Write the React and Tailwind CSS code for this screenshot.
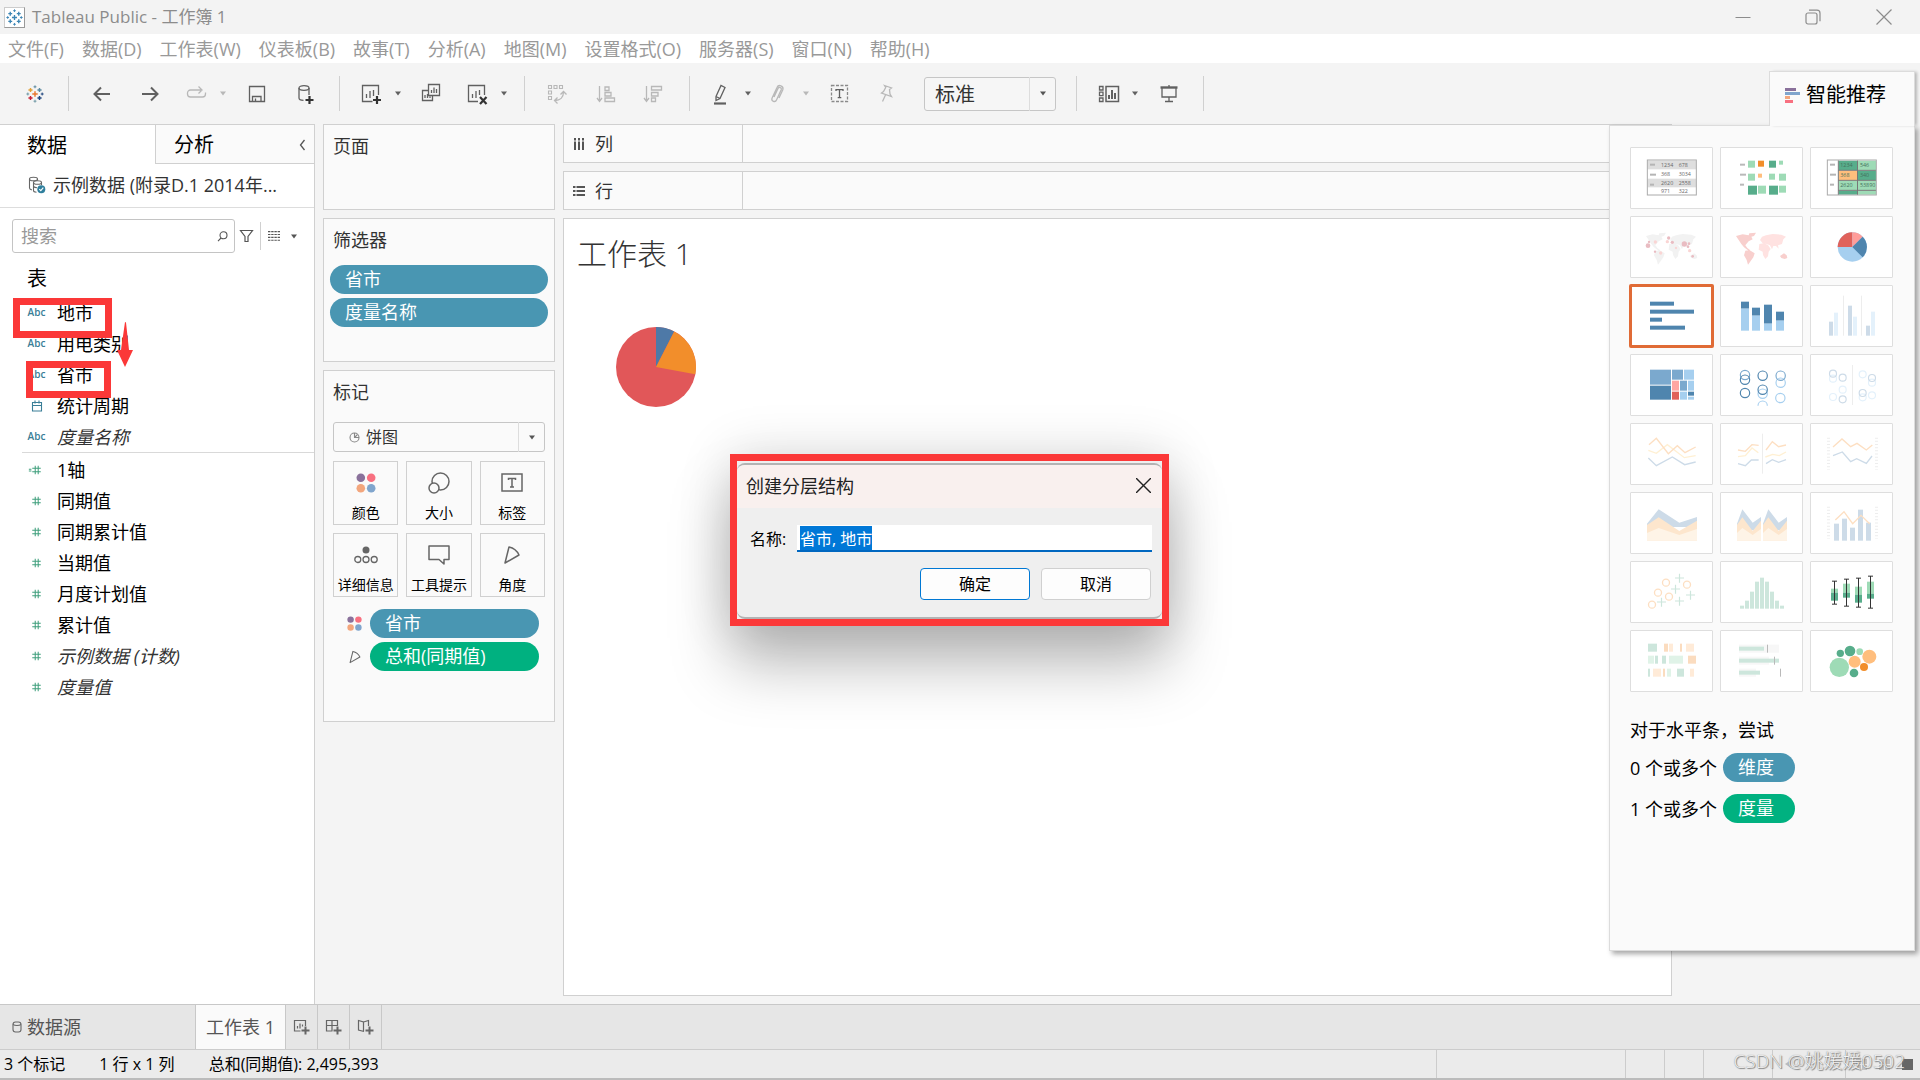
import React, { useState } from 'react'

const MENUS = ['文件(F)', '数据(D)', '工作表(W)', '仪表板(B)', '故事(T)', '分析(A)', '地图(M)', '设置格式(O)', '服务器(S)', '窗口(N)', '帮助(H)']

const DIMENSIONS = [
  { name: '地市', type: 'abc' },
  { name: '用电类别', type: 'abc' },
  { name: '省市', type: 'abc' },
  { name: '统计周期', type: 'date' },
  { name: '度量名称', type: 'abc', generated: true },
]

const MEASURES = [
  { name: '1轴', type: 'number', calculated: true },
  { name: '同期值', type: 'number' },
  { name: '同期累计值', type: 'number' },
  { name: '当期值', type: 'number' },
  { name: '月度计划值', type: 'number' },
  { name: '累计值', type: 'number' },
  { name: '示例数据 (计数)', type: 'number', generated: true },
  { name: '度量值', type: 'number', generated: true },
]

/* ---------- small pieces ---------- */

function Caret({ className = 'text-[#555]' }) {
  return (
    <svg width="8" height="5" viewBox="0 0 8 5" className={className}>
      <path d="M1 0.5h6L4 4.5z" fill="currentColor" />
    </svg>
  )
}

function Sep() {
  return <div className="w-px h-[35px] bg-[#d0d0d0] mx-2.5" />
}

function ToolButton({ label, children, caret, faded }) {
  const color = faded ? 'text-[#b8b8b8]' : 'text-[#606060]'
  return (
    <div className={`flex h-10 ${color}`}>
      <button aria-label={label} className={`${caret ? 'w-11' : 'w-12'} flex items-center justify-center`}>
        <svg width="24" height="24" viewBox="0 0 24 24" fill="none" stroke="currentColor" strokeWidth="1.3">
          {children}
        </svg>
      </button>
      {caret && (
        <button aria-label={`${label} 选项`} className="w-3.5 flex items-center">
          <Caret className={color} />
        </button>
      )}
    </div>
  )
}

function Plus({ x, y, s, color, w = 1.6 }) {
  return <path d={`M${x - s} ${y}h${2 * s}M${x} ${y - s}v${2 * s}`} stroke={color} strokeWidth={w} />
}

function TableauMark({ size, colors }) {
  const [a, b, c, d, e, f] = colors
  return (
    <svg width={size} height={size} viewBox="0 0 20 20" fill="none">
      <Plus x={10} y={10} s={3} color={a} />
      <Plus x={5} y={5.5} s={2.3} color={b} />
      <Plus x={15} y={5.5} s={2.3} color={c} />
      <Plus x={5} y={14.5} s={2.3} color={d} />
      <Plus x={15} y={14.5} s={2.3} color={e} />
      <Plus x={10} y={2} s={1.6} color={c} w={1.1} />
      <Plus x={10} y={18} s={1.6} color={f} w={1.1} />
      <Plus x={2} y={10} s={1.6} color={f} w={1.1} />
      <Plus x={18} y={10} s={1.6} color={e} w={1.1} />
    </svg>
  )
}

function ColorDots({ size }) {
  return (
    <svg width={size} height={size} viewBox="0 0 20 20">
      <circle cx="4.8" cy="4.8" r="4.3" fill="#8a719b" />
      <circle cx="15.2" cy="4.8" r="4.3" fill="#f87080" />
      <circle cx="4.8" cy="15.2" r="4.3" fill="#f3a67d" />
      <circle cx="15.2" cy="15.2" r="4.3" fill="#80a5cd" />
    </svg>
  )
}

function AngleIcon({ size }) {
  return (
    <svg width={size} height={size} viewBox="0 0 20 20" fill="none" stroke="#666" strokeWidth="1.5" strokeLinejoin="round">
      <path d="M7 2 L3 18 L17 10 Q14 3.5 7 2z" />
    </svg>
  )
}

function Pill({ color, className = '', children }) {
  const bg = color === 'green' ? 'bg-[#00b180]' : 'bg-[#4996b2]'
  return (
    <div className={`${bg} ${className} h-[29px] rounded-full px-[15px] text-lg leading-[29px] text-white whitespace-nowrap`}>
      {children}
    </div>
  )
}

function FieldIcon({ field }) {
  if (field.type === 'abc') return 'Abc'
  if (field.type === 'date') {
    return (
      <svg width="12" height="12" viewBox="4 0 12 12" stroke="#3a7e97" strokeWidth="1.1" fill="none">
        <path d="M5.5 2.5h9v8.5h-9zM5.5 5.5h9M8 0.5v3M12 0.5v3" />
      </svg>
    )
  }
  return (
    <svg width="20" height="12" viewBox="0 0 20 12" stroke="#3f9f7c" strokeWidth="1.2" fill="none">
      <path d="M5 4h10M5 8h10M8.5 1v10M12 1v10" />
      {field.calculated && <path d="M1 5h3M1 7.2h3" />}
    </svg>
  )
}

function FieldRow({ field, className }) {
  return (
    <li className={`flex items-center h-[31px] gap-3 ${className}`}>
      <span className="w-[17px] flex justify-center text-[10px] font-semibold text-[#3a7e97]"><FieldIcon field={field} /></span>
      <span className={`text-lg leading-[26px] ${field.generated ? 'italic text-[#333]' : 'text-black'}`}>{field.name}</span>
    </li>
  )
}

/* ---------- title, menu and toolbar ---------- */

function TitleBar() {
  return (
    <header className="h-[34px] bg-[#f3f3f3] flex items-center pl-1 text-[#8c8c8c]">
      <span className="w-[21px] h-[21px] bg-white border border-r-[#999] border-b-[#999] border-[#ccc] flex items-center justify-center">
        <TableauMark size={17} colors={['#3d86b5', '#3d86b5', '#3d86b5', '#3d86b5', '#3d86b5', '#3d86b5']} />
      </span>
      <h1 className="ml-[7px] text-[17px] leading-[26px]">Tableau Public - 工作簿 1</h1>
      <div className="ml-auto flex">
        <button aria-label="最小化" className="w-[70px] flex justify-center">
          <svg width="16" height="16" viewBox="0 0 16 16" stroke="currentColor" fill="none"><path d="M0.5 8.5h15" /></svg>
        </button>
        <button aria-label="还原" className="w-[70px] flex justify-center">
          <svg width="16" height="16" viewBox="0 0 16 16" stroke="currentColor" strokeWidth="1.2" fill="none">
            <rect x="1" y="4" width="11" height="11" rx="2" />
            <path d="M4 1.2h8a3 3 0 0 1 3 3v8" />
          </svg>
        </button>
        <button aria-label="关闭" className="w-[72px] flex justify-center">
          <svg width="16" height="16" viewBox="0 0 16 16" stroke="currentColor" strokeWidth="1.2" fill="none"><path d="M0.5 0.5l15 15M15.5 0.5l-15 15" /></svg>
        </button>
      </div>
    </header>
  )
}

function Toolbar() {
  return (
    <div className="h-[61px] flex items-center bg-[#f4f4f4]">
      <button aria-label="开始页" className="w-[58px] pl-3 flex justify-center">
        <TableauMark size={18} colors={['#e8762c', '#e0a13a', '#5b8aa0', '#c72035', '#1f457e', '#7099a6']} />
      </button>
      <Sep />
      <ToolButton label="撤消"><path d="M19 12H4M10 5.5L3.5 12l6.5 6.5" strokeWidth="2" /></ToolButton>
      <ToolButton label="重做"><path d="M3 12h15M12 5.5l6.5 6.5-6.5 6.5" strokeWidth="2" /></ToolButton>
      <ToolButton label="恢复" faded caret>
        <path d="M16 8H5.5a3 3 0 0 0-3 3v1a3 3 0 0 0 3 3h12a3 3 0 0 0 3-3v-1.5M13.5 4.5L17 8l-3.5 3.5" />
      </ToolButton>
      <ToolButton label="保存"><path d="M4.5 4.5h15v15h-15zM7.5 19.5v-5h8.5v5M10.5 19.5v-3" /></ToolButton>
      <ToolButton label="新建数据源">
        <path d="M6 6v10c0 1.5 2 2.3 4.5 2.3M16 6v7" />
        <ellipse cx="11" cy="6" rx="5" ry="2.3" />
        <path d="M16.5 14v8M12.5 18h8" stroke="#333" strokeWidth="2.2" />
      </ToolButton>
      <Sep />
      <ToolButton label="新建工作表" caret>
        <path d="M12.5 19.5h-10v-16h16V13M6.5 16v-4M10 16V9M13.5 14v-6" />
        <path d="M17 14v8M13 18h8" stroke="#333" strokeWidth="2.2" />
      </ToolButton>
      <ToolButton label="复制">
        <path d="M8.5 2.5h11v11h-11zM8.5 8.5h-6v10h10v-5M11.5 11v-3M14 11V5.5M16.5 11V7M5 16v-3M7.5 16v-4M10 16v-1.5" />
      </ToolButton>
      <ToolButton label="清除工作表" caret>
        <path d="M12 19.5H2.500v-16h16V13M6.500 16v-4M10 16V9M13.500 13V8" />
        <path d="M14 15l6.500 7M20.500 15L14 22" stroke="#333" strokeWidth="2.200" />
      </ToolButton>
      <Sep />
      <ToolButton label="交换行和列" faded>
        <path d="M1.5 3.5h3v3h-3zM7 3.5h3v3H7zM12.5 3.5h3v3h-3zM1.5 9h3v3h-3zM1.5 14.5h3v3h-3z" strokeWidth="1.1" />
        <path d="M8 18.5c5 0 8.5-3 8.5-8.5M13.5 12.500l3-3 3 3M10.500 15.500l-3 3 3 3" />
      </ToolButton>
      <ToolButton label="升序排序" faded>
        <path d="M4.5 4v15M2 16l2.5 3.5L7 16M10 5h4v3.5h-4zM10 10.5h6V14h-6zM10 16h9.5v3.5H10z" />
      </ToolButton>
      <ToolButton label="降序排序" faded>
        <path d="M3.5 4v15M1 16l2.5 3.5L6 16M8.5 4.5h10V8h-10zM8.5 10.5h6.5V14H8.500zM8.500 16h4v3.500h-4z" />
      </ToolButton>
      <Sep />
      <ToolButton label="突出显示" caret>
        <path d="M6 14.5L11 3.5l4 2-5 11-4 2zM6 14.5l4 2" />
        <path d="M4 21.5h12" strokeWidth="2.2" />
      </ToolButton>
      <ToolButton label="组成员" faded caret>
        <path d="M6 15l4-8.5c1-2 4-1 3.2 1.2L8.500 18c-1.200 2.800-5.500 1.200-4.500-1.800L9 5.500c1.500-3.500 7-1.800 5.800 2.200L11 16" />
      </ToolButton>
      <ToolButton label="显示标记标签">
        <rect x="3.5" y="3.5" width="16" height="16" strokeDasharray="3 1.5" stroke="#8a8a8a" />
        <path d="M8 9V7.7h7V9M11.5 7.7v8M9.700 15.700h3.600" />
      </ToolButton>
      <ToolButton label="固定轴" faded>
        <path d="M8.500 3.500L15.500 6l-2 1.500.5 4.500 1.500 2.500-10-3.500 2-1.500 2.200-4zM9.500 13l-3 6.500" />
      </ToolButton>
      <div className="relative ml-3 w-[132px] h-[34px]">
        <select aria-label="适合" defaultValue="标准" className="appearance-none w-full h-full pl-2.5 pt-0.5 text-xl leading-[30px] text-[#333] bg-[#f6f6f6] border border-[#c6c6c6] rounded-[3px]">
          <option>标准</option>
          <option>适合宽度</option>
          <option>整个视图</option>
        </select>
        <span className="pointer-events-none absolute right-0 top-0 h-full w-[27px] border-l border-[#ddd] flex items-center justify-center"><Caret /></span>
      </div>
      <div className="w-2.5" />
      <Sep />
      <ToolButton label="显示卡" caret>
        <path d="M9 4.5h12.5v15H9z" strokeWidth="1.5" />
        <path d="M2.5 4.5h3.5v3.5H2.5zM2.5 10.2h3.5v3.5H2.5zM2.5 16h3.5v3.5H2.5z" />
        <path d="M12 17v-4M15 17V8M18 17v-6" strokeWidth="2" />
      </ToolButton>
      <ToolButton label="演示模式">
        <path d="M3.5 5.5h17" strokeWidth="2.4" />
        <path d="M5 6v9h14V6M12 15v4.5M8 19.5h8M12 3v2" />
      </ToolButton>
      <Sep />
    </div>
  )
}

/* ---------- data pane ---------- */

function DataPane() {
  return (
    <aside className="w-[315px] shrink-0 bg-white border-r border-t border-[#d0d0d0] text-black">
      <div className="flex h-[39px]" role="tablist">
        <button role="tab" aria-selected="true" className="w-[155px] pl-[27px] pt-0.5 text-left text-xl">数据</button>
        <button role="tab" aria-selected="false" className="flex-1 pl-[18px] pr-2 pt-0.5 flex items-center justify-between text-xl bg-[#fafafa] border-l border-b border-[#d0d0d0]">
          分析
          <svg width="7" height="12" viewBox="0 0 7 12" fill="none" stroke="#555" strokeWidth="1.3"><path d="M5.5 1L1.5 6l4 5" /></svg>
        </button>
      </div>

      <div className="flex items-center h-[44px] pl-7 pb-0.5 gap-[7px] border-b border-[#ddd]">
        <svg width="18" height="18" viewBox="0 0 18 18" fill="none" stroke="#666" strokeWidth="1.1">
          <ellipse cx="5.5" cy="3" rx="4" ry="1.8" />
          <path d="M1.5 3v9c0 1 1 1.6 2.3 1.9M9.5 3v1.5" />
          <ellipse cx="9.5" cy="6.5" rx="4" ry="1.8" />
          <path d="M5.5 6.5v8c0 1 1.5 1.7 3 1.8M13.5 6.5v2.5M5.5 10.5c1 1 2 1.3 3.5 1.3" />
          <circle cx="13.3" cy="13.2" r="4" fill="#2f7f9d" stroke="none" />
          <path d="M11.3 13.2l1.5 1.5 2.5-3" stroke="#fff" />
        </svg>
        <span className="text-lg text-[#333] whitespace-nowrap">示例数据 (附录D.1 2014年...</span>
      </div>

      <div className="flex items-center mt-[11px] pl-3">
        <div className="relative w-[223px] h-[34px]">
          <input aria-label="搜索" placeholder="搜索" className="w-full h-full pl-2 text-lg text-black placeholder:text-[#999] bg-white border border-[#c4c4c4] rounded-[3px]" />
          <svg className="absolute right-[7px] top-3" width="11" height="11" viewBox="0 0 11 11" fill="none" stroke="#555" strokeWidth="1.1">
            <circle cx="6.5" cy="4.3" r="3.5" /><path d="M4 7L1 10.2" />
          </svg>
        </div>
        <button aria-label="筛选" className="ml-1">
          <svg width="15" height="14" viewBox="0 0 15 14" fill="none" stroke="#555" strokeWidth="1.2"><path d="M1.5 1.5h12L9 7.5V12.5H6V7.5z" /></svg>
        </button>
        <div className="w-px h-7 bg-[#d0d0d0] ml-1.5 mr-[7px]" />
        <button aria-label="视图" className="flex items-center gap-2.5">
          <svg width="12" height="10" viewBox="0 0 12 10" stroke="#555" strokeDasharray="2.4 0.8" strokeWidth="1.1"><path d="M0 0.6h12M0 3.5h12M0 6.4h12M0 9.3h12" /></svg>
          <Caret />
        </button>
      </div>

      <h2 className="pl-[27px] mt-2.5 h-[34px] leading-[32px] text-xl">表</h2>
      <ul>
        {DIMENSIONS.map((f) => <FieldRow key={f.name} field={f} className="pl-7" />)}
      </ul>
      <ul className="ml-[22px] border-t border-[#d9d9d9] pt-px">
        {MEASURES.map((f) => <FieldRow key={f.name} field={f} className="pl-1.5" />)}
      </ul>
    </aside>
  )
}

/* ---------- cards column ---------- */

function MarkButton({ label, children }) {
  return (
    <button className="h-16 pt-2 flex flex-col items-center justify-between border border-[#d0d0d0] text-sm leading-[22px] text-black whitespace-nowrap">
      <span className="h-[26px] flex items-center">{children}</span>
      {label}
    </button>
  )
}

function CardsColumn() {
  const card = 'bg-[#fafafa] border border-[#d0d0d0] text-[#333]'
  return (
    <div className="w-[232px] shrink-0 ml-2 flex flex-col gap-2">
      <section className={`${card} h-[86px] px-[9px] pt-[7px]`}>
        <h2 className="text-lg">页面</h2>
      </section>
      <section className={`${card} h-[144px] pt-[7px] px-1.5`}>
        <h2 className="text-lg pl-[3px]">筛选器</h2>
        <div className="flex flex-col gap-1 mt-[11px]">
          <Pill>省市</Pill>
          <Pill>度量名称</Pill>
        </div>
      </section>
      <section className={`${card} h-[352px] px-[9px] pt-[7px]`}>
        <h2 className="text-lg">标记</h2>
        <div className="relative mt-4 h-[30px]">
          <select aria-label="标记类型" defaultValue="饼图" className="appearance-none w-full h-full pl-8 text-base leading-6 text-[#333] border border-[#c6c6c6] rounded-[3px]">
            <option>饼图</option>
            <option>条形图</option>
            <option>线</option>
          </select>
          <svg className="pointer-events-none absolute left-4 top-2.5" width="11" height="11" viewBox="0 0 11 11" fill="none" stroke="#888" strokeWidth="1.1">
            <circle cx="5.5" cy="5.5" r="4.5" /><path d="M5.5 1v4.5H10M5.5 5.5l3-3" />
          </svg>
          <span className="pointer-events-none absolute right-0 top-0 h-full w-[27px] border-l border-[#ddd] flex items-center justify-center"><Caret /></span>
        </div>

        <div className="grid grid-cols-3 gap-2 mt-[9px]">
          <MarkButton label="颜色"><ColorDots size={20} /></MarkButton>
          <MarkButton label="大小">
            <svg width="22" height="22" viewBox="0 0 22 22" fill="none" stroke="#666" strokeWidth="1.5">
              <circle cx="12.5" cy="9.5" r="8.5" /><circle cx="6" cy="16" r="5" fill="#fafafa" />
            </svg>
          </MarkButton>
          <MarkButton label="标签">
            <svg width="22" height="20" viewBox="0 0 22 20" fill="none" stroke="#666" strokeWidth="1.5">
              <rect x="1" y="1" width="20" height="17" /><path d="M7.5 7V5.5h7V7M11 5.5v8.5M9 14h4" />
            </svg>
          </MarkButton>
          <MarkButton label="详细信息">
            <svg width="24" height="18" viewBox="0 0 24 18" fill="none" stroke="#666" strokeWidth="1.3">
              <circle cx="12" cy="4" r="3.5" fill="#666" stroke="none" />
              <circle cx="3.8" cy="13.5" r="3" /><circle cx="12" cy="13.5" r="3" /><circle cx="20.2" cy="13.5" r="3" />
            </svg>
          </MarkButton>
          <MarkButton label="工具提示">
            <svg width="22" height="20" viewBox="0 0 22 20" fill="none" stroke="#666" strokeWidth="1.5" strokeLinejoin="round">
              <path d="M1 1h20v13.5h-5V19l-5-4.5H1z" />
            </svg>
          </MarkButton>
          <MarkButton label="角度"><AngleIcon size={20} /></MarkButton>
        </div>

        <ul className="mt-3 flex flex-col gap-1 pl-3.5 pr-1.5">
          <li className="flex items-center gap-2">
            <ColorDots size={15} />
            <Pill className="flex-1">省市</Pill>
          </li>
          <li className="flex items-center gap-2">
            <span className="w-[15px] flex justify-center"><AngleIcon size={14} /></span>
            <Pill color="green" className="flex-1">总和(同期值)</Pill>
          </li>
        </ul>
      </section>
    </div>
  )
}

/* ---------- view ---------- */

function Shelf({ label, children }) {
  return (
    <div className="flex h-[39px] bg-[#fafafa] border border-[#d0d0d0] text-[#333]">
      <div className="w-[179px] pl-[9px] flex items-center gap-2.5 text-lg border-r border-[#d0d0d0]">
        <svg width="12" height="12" viewBox="0 0 12 12" fill="none" stroke="#555">{children}</svg>
        {label}
      </div>
    </div>
  )
}

function Worksheet() {
  return (
    <main className="flex-1 ml-2 mr-[248px] mb-2 flex flex-col gap-2 min-w-0">
      <Shelf label="列">
        <path d="M2 0v2.5M6 0v2.5M10 0v2.5M2 3.5v8.5M6 3.5v8.5M10 3.5v8.5" strokeWidth="2" />
      </Shelf>
      <Shelf label="行">
        <path d="M0 2h2.5M0 6h2.5M0 10h2.5M3.5 2H12M3.5 6H12M3.5 10H12" strokeWidth="2" />
      </Shelf>
      <section className="flex-1 bg-white border border-[#d0d0d0] pl-[13px] pt-[13px]">
        <h2 className="text-[30px] leading-[44px] font-light text-[#333]">工作表 1</h2>
        <svg className="mt-[50px] ml-[38px]" width="82" height="82" viewBox="-41 -41 82 82" role="img" aria-label="饼图">
          <circle r="40" fill="#e15759" />
          <path d="M0 0V-40A40 40 0 0 1 18.2 -35.6z" fill="#4e79a7" />
          <path d="M0 0L18.2 -35.6A40 40 0 0 1 39.3 7.3z" fill="#f28e2b" />
        </svg>
      </section>
    </main>
  )
}

/* ---------- show me panel ---------- */

const rects = (list, fill) => list.map(([x, y, w, h]) => <rect key={`${x}-${y}`} x={x} y={y} width={w} height={h} fill={fill} />)
const rings = (list, stroke, r, w) => list.map(([x, y]) => <circle key={`${x}-${y}`} cx={x} cy={y} r={r} fill="none" stroke={stroke} strokeWidth={w} />)

const AMERICAS = 'M48 60l20-5 18 3 2-6 20-2-6 10-8 2 4 8-12 6-10 12 6 8 8 6-4 2-14-10-8-10-8-12zM76 104l12-2 16 10-4 12-10 14-6 8-4-14-8-14z'
const AFROEURASIA = 'M120 72l6-10 12-4 20-4 26 2 14 6-8 8-4 14-12 4 2 10-8-8-8 0-4 10-6-12-10-4-12-2zM118 84l14-2 12 5 8 12-6 8-2 14-8 8-7-12-1-10-12-6z'
const OCEANIA = 'M180 120l12-8 8 6 2 8-8 3-10-3z'

const THUMBS = [
  {
    name: '文本表',
    art: (
      <g>
        <rect x="52" y="39" width="147" height="105" fill="#fff" />
        {rects([[53, 41, 145, 26], [53, 95, 145, 26]], '#dedede')}
        {rects([[60, 50, 15, 6], [60, 80, 18, 6], [60, 110, 12, 6]], '#b5b5b5')}
        <g fontSize="16" fill="#666">
          <text x="93" y="60">1234</text><text x="146" y="60">678</text>
          <text x="93" y="87">368</text><text x="146" y="87">3034</text>
          <text x="93" y="114">2620</text><text x="146" y="114">2558</text>
          <text x="93" y="139">971</text><text x="146" y="139">322</text>
        </g>
        <rect x="52" y="39" width="147" height="105" fill="none" stroke="#aaa" strokeWidth="3" />
      </g>
    ),
  },
  {
    name: '热图',
    art: (
      <g>
        {rects([[60, 50, 15, 6], [60, 80, 18, 6], [60, 110, 12, 6]], '#b9b9b9')}
        {rects([[84, 41, 21, 21], [177, 41, 12, 12], [84, 80, 21, 21], [147, 80, 18, 18], [177, 80, 21, 21], [114, 116, 24, 24], [177, 116, 21, 21]], '#9edbb6')}
        {rects([[147, 41, 21, 21], [84, 116, 27, 27], [147, 116, 27, 27]], '#57ad8b')}
        {rects([[114, 41, 18, 18]], '#f28e2b')}
        {rects([[114, 80, 12, 12]], '#ffbe7d')}
      </g>
    ),
  },
  {
    name: '突出显示表',
    art: (
      <g>
        <rect x="52" y="39" width="147" height="105" fill="#fff" />
        {rects([[86, 41, 55, 28], [144, 71, 54, 29], [86, 131, 55, 12]], '#57ad8b')}
        {rects([[144, 41, 54, 28], [86, 101, 55, 29], [144, 101, 54, 29], [144, 131, 54, 12]], '#9edbb6')}
        {rects([[86, 71, 55, 29]], '#ffbe7d')}
        {rects([[60, 50, 15, 6], [60, 80, 18, 6], [60, 110, 12, 6]], '#b5b5b5')}
        <path d="M85 40v104M142.5 40v104M85 70h113M85 100h113M85 130h113" stroke="#777" strokeWidth="3" />
        <g fontSize="16" fill="#44705c">
          <text x="91" y="60">1234</text><text x="150" y="60">546</text>
          <text x="91" y="90">368</text><text x="150" y="90">340</text>
          <text x="91" y="121">2620</text><text x="150" y="121">53890</text>
        </g>
        <rect x="52" y="39" width="147" height="105" fill="none" stroke="#aaa" strokeWidth="3" />
      </g>
    ),
  },
  {
    name: '符号地图',
    art: (
      <g>
        <path d={AMERICAS + AFROEURASIA + OCEANIA} fill="#f2f2f2" />
        <g fill="#e9bcc2">
          <circle cx="54" cy="89" r="7" /><circle cx="57" cy="78" r="3.5" /><circle cx="116" cy="66" r="5" />
          <circle cx="127" cy="79" r="5" /><circle cx="163" cy="84" r="8" /><circle cx="177" cy="83" r="4" />
          <circle cx="75" cy="107" r="3.5" /><circle cx="188" cy="121" r="4" /><circle cx="174" cy="92" r="4" />
        </g>
        <g fill="#fad5d4">
          <circle cx="76" cy="78" r="5" /><circle cx="112" cy="77" r="5" /><circle cx="92" cy="111" r="5" />
          <circle cx="138" cy="96" r="3.5" /><circle cx="179" cy="104" r="5" />
        </g>
      </g>
    ),
  },
  {
    name: '地图',
    art: (
      <g>
        <path d={AMERICAS + OCEANIA} fill="#f8cfcd" />
        <path d={AFROEURASIA} fill="#ffe2e1" />
      </g>
    ),
  },
  {
    name: '饼图',
    art: (
      <g transform="translate(127 93)">
        <circle r="44" fill="#a6cfef" />
        <path d="M0 0H-44A44 44 0 0 1 0 -44z" fill="#e0625b" />
        <path d="M0 0V-44A44 44 0 0 1 31 -31z" fill="#ff9d9a" />
        <path d="M0 0L31 -31A44 44 0 0 1 31 31z" fill="#4f85ae" />
      </g>
    ),
  },
  { name: '水平条', selected: true, art: <g>{rects([[60, 50, 72, 12], [60, 74, 132, 12], [60, 98, 36, 12], [60, 122, 105, 12]], '#4f85ae')}</g> },
  {
    name: '堆叠条',
    art: (
      <g>
        {rects([[63, 50, 24, 21], [96, 68, 24, 24], [132, 59, 24, 57], [168, 80, 24, 27]], '#4f85ae')}
        {rects([[63, 71, 24, 66], [96, 92, 24, 45], [132, 116, 24, 21], [168, 107, 24, 30]], '#a6cfef')}
      </g>
    ),
  },
  {
    name: '并排条',
    art: (
      <g>
        {rects([[57, 110, 12, 42], [114, 62, 12, 90], [168, 122, 12, 30]], '#cddbe8')}
        {rects([[72, 83, 12, 69], [129, 95, 12, 57], [183, 80, 12, 72]], '#e4f1fb')}
        {rects([[99, 32, 3, 120], [153, 32, 3, 120]], '#ededed')}
      </g>
    ),
  },
  {
    name: '树状图',
    art: (
      <g>
        {rects([[60, 47, 63, 45], [126, 47, 33, 30], [150, 80, 21, 30]], '#7ba9ce')}
        {rects([[60, 95, 63, 42], [174, 113, 18, 12]], '#4f85ae')}
        {rects([[162, 47, 30, 30], [174, 80, 18, 30], [150, 113, 21, 24], [174, 128, 18, 9]], '#a6cfef')}
        {rects([[126, 80, 21, 30]], '#ffa6a2')}
        {rects([[126, 113, 21, 24]], '#e0625b')}
      </g>
    ),
  },
  {
    name: '圆视图',
    art: (
      <g>
        {rings([[182, 86], [181, 132], [128, 119]], '#a6cfef', 14, 3.5)}
        <path d="M114 155a14 14 0 0 1 28 0" fill="none" stroke="#a6cfef" strokeWidth="3.5" />
        {rings([[75, 63], [182, 65]], '#7ba9ce', 14, 3.5)}
        {rings([[75, 77], [75, 117], [128, 65], [128, 107]], '#4f85ae', 14, 3.5)}
      </g>
    ),
  },
  {
    name: '并排圆',
    art: (
      <g>
        {rings([[69, 74], [98, 107], [69, 129], [158, 61], [186, 86], [158, 130], [186, 124]], '#e4f1fb', 10.5, 3.5)}
        {rings([[69, 59], [98, 71], [98, 136], [186, 72], [158, 117]], '#cddbe8', 10.5, 3.5)}
        {rects([[126, 33, 3, 120]], '#ededed')}
      </g>
    ),
  },
  {
    name: '连续线',
    art: (
      <g fill="none" strokeWidth="4">
        <path d="M55 82l24 9 33-26 51 39 34-6" stroke="#fff0d3" />
        <path d="M57 65l22-19 36 46 27-24 23 21 32-17" stroke="#fddfc2" />
        <path d="M55 105l24 23 48-26 37 23 33-8" stroke="#cddbe8" />
      </g>
    ),
  },
  {
    name: '离散线',
    art: (
      <g fill="none" strokeWidth="4">
        <path d="M54 101l22-3 20-23 19 14M136 102l22-8 20 4 20-11" stroke="#fff0d3" />
        <path d="M54 81l22 4 20-20 20 2M138 81l19-25 19 15 22-5" stroke="#fddfc2" />
        <path d="M54 122l22 6 18-17h22M138 122l19-12 19 8 22-8" stroke="#cddbe8" />
        <path d="M127.5 32v120" stroke="#ededed" strokeWidth="3" />
      </g>
    ),
  },
  {
    name: '双线',
    art: (
      <g fill="none" strokeWidth="4">
        <path d="M69 72l27-24 26 23 19-10 28 20 18-15" stroke="#fddfc2" />
        <path d="M69 98l28-11 25 29 18-9 29 14 17-22" stroke="#cddbe8" />
        <path d="M55.5 44v96M199.5 44v96" stroke="#ededed" strokeWidth="9" strokeDasharray="3 6.5" />
      </g>
    ),
  },
  {
    name: '面积图',
    art: (
      <g>
        <path d="M51 95l35-43 62 40 53-17v30H51z" fill="#cddbe8" />
        <path d="M51 99l35-23 62 41 53-31v60H51z" fill="#fde6cd" />
        <path d="M51 123l35-15 62 21 53-18v35H51z" fill="#fef4e7" />
      </g>
    ),
  },
  {
    name: '离散面积图',
    art: (
      <g>
        <path d="M51 95l16-43 31 40 25-17v40H51zM129 95l16-43 31 40 25-17v40h-72z" fill="#cddbe8" />
        <path d="M51 99l16-23 31 41 25-31v60H51zM129 99l16-23 31 41 25-31v60h-72z" fill="#fde6cd" />
        <path d="M51 123l16-15 31 21 25-18v35H51zM129 123l16-15 31 21 25-18v35h-72z" fill="#fef4e7" />
      </g>
    ),
  },
  {
    name: '双组合',
    art: (
      <g>
        {rects([[72, 95, 15, 51], [96, 80, 15, 66], [120, 107, 15, 39], [144, 53, 15, 93], [168, 92, 15, 54]], '#cddbe8')}
        <path d="M76 84l26-25 26 36 25-25 26 25" fill="none" stroke="#fddfc2" strokeWidth="4" />
        <path d="M55.5 44v96M199.5 44v96" stroke="#ededed" strokeWidth="9" strokeDasharray="3 6.5" />
      </g>
    ),
  },
  {
    name: '散点图',
    art: (
      <g>
        {rings([[108, 65], [171, 71], [84, 95], [117, 107], [66, 131]], '#fddfc2', 10.5, 4)}
        <path d="M135 51h27M148.5 38v27M123 84h27M136.5 71v27M168 102h27M181.5 89v27M81 123h27M94.5 110v27M135 120h27M148.5 107v27" stroke="#cde6dc" strokeWidth="3.5" />
      </g>
    ),
  },
  {
    name: '直方图',
    art: <g>{rects([[60, 134, 12, 9], [75, 119, 12, 24], [90, 92, 12, 51], [105, 62, 12, 81], [120, 50, 12, 93], [135, 62, 12, 81], [150, 92, 12, 51], [165, 119, 12, 24], [180, 134, 12, 9]], '#cde6dc')}</g>,
  },
  {
    name: '盒须图',
    art: (
      <g>
        {rects([[63, 83, 21, 12], [99, 68, 21, 27], [135, 77, 21, 24], [171, 62, 21, 36]], '#9edbb6')}
        {rects([[63, 95, 21, 24], [99, 95, 21, 15], [135, 101, 21, 24], [171, 98, 21, 15]], '#57ad8b')}
        <path d="M66 60.5h15M66 129.5h15M73.5 60v69M102 54.5h15M102 135.5h15M109.5 54v81M138 51.5h15M138 138.5h15M145.5 51v87M174 45.5h15M174 141.5h15M181.5 45v96" stroke="#333" strokeWidth="3" />
      </g>
    ),
  },
  {
    name: '甘特图',
    art: (
      <g>
        {rects([[54, 41, 27, 24], [75, 77, 9, 24], [96, 77, 12, 24], [54, 116, 6, 24], [141, 116, 21, 24]], '#cde6dc')}
        {rects([[54, 77, 18, 24], [117, 77, 42, 24], [111, 116, 12, 24]], '#e0f3e8')}
        {rects([[102, 41, 12, 24], [150, 41, 6, 24], [174, 77, 24, 24], [99, 116, 6, 24]], '#fbdcbf')}
        {rects([[117, 41, 12, 24], [168, 41, 24, 24], [69, 116, 24, 24], [180, 116, 12, 24]], '#ffebd8')}
      </g>
    ),
  },
  {
    name: '靶心图',
    art: (
      <g>
        {rects([[57, 44, 120, 24], [57, 80, 90, 24], [57, 116, 51, 24]], '#f7f7f7')}
        {rects([[57, 50, 75, 12], [57, 86, 120, 12], [57, 122, 63, 12]], '#cde6dc')}
        {rects([[141, 44, 3, 24], [162, 80, 3, 24], [180, 116, 3, 24]], '#b9b9b9')}
      </g>
    ),
  },
  {
    name: '填充气泡图',
    art: (
      <g>
        <circle cx="88" cy="112" r="29" fill="#9edbb6" /><circle cx="149" cy="65" r="10" fill="#9edbb6" />
        <circle cx="120" cy="63" r="16" fill="#57ad8b" /><circle cx="91" cy="70" r="11" fill="#57ad8b" /><circle cx="132" cy="129" r="13" fill="#57ad8b" />
        <circle cx="134" cy="95" r="18" fill="#ffbe7d" /><circle cx="178" cy="80" r="21" fill="#ffbe7d" />
        <circle cx="162" cy="111" r="12" fill="#f28e2b" />
      </g>
    ),
  },
]

function ShowMe() {
  return (
    <>
      <div className="absolute right-[5px] top-[125px] bottom-[129px] w-[306px] bg-[#fafafa] border border-[#dcdcdc] shadow-[3px_3px_5px_rgba(0,0,0,0.35)] px-5 pt-[21px] text-black">
        <div className="grid grid-cols-[repeat(3,83px)] gap-[7px]">
          {THUMBS.map((t) => (
            <button key={t.name} title={t.name} aria-label={t.name}
              className={`h-[62px] rounded-[1px] bg-white ${t.selected ? 'outline-3 -outline-offset-2 outline-[#e06b36]' : 'border border-[#dedede]'}`}>
              <svg className="w-full h-full" viewBox={t.selected ? '0 0 249 186' : '3 3 243 180'}>{t.art}</svg>
            </button>
          ))}
        </div>
        <p className="mt-6 text-lg">对于水平条，尝试</p>
        <p className="mt-[9px] flex items-center gap-1.5 text-lg">0 个或多个 <Pill className="w-[72px]">维度</Pill></p>
        <p className="mt-3 flex items-center gap-1.5 text-lg">1 个或多个 <Pill color="green" className="w-[72px]">度量</Pill></p>
      </div>
      <button className="absolute right-[5px] top-[71px] w-[146px] h-[55px] pl-[15px] pb-2 flex items-center gap-1.5 bg-[#fafafa] border border-b-0 border-[#dcdcdc] shadow-[3px_0_3px_-1px_rgba(0,0,0,0.25)] text-xl text-black">
        <svg width="15" height="15" viewBox="0 0 15 15">
          <path d="M0 0h11v3H0z" fill="#8a719b" /><path d="M0 4h15v3H0z" fill="#80a5cd" />
          <path d="M0 8h5v3H0z" fill="#f3a67d" /><path d="M0 12h8v3H0z" fill="#f87080" />
        </svg>
        智能推荐
      </button>
    </>
  )
}

/* ---------- bottom bars ---------- */

function SheetTabs() {
  const add = 'w-8 flex items-center justify-center border-r border-[#c8c8c8]'
  return (
    <nav className="flex h-[45px] bg-[#e6e6e6] border-t border-[#c8c8c8] text-[#555] text-lg">
      <button className="w-[195px] pl-3 flex items-center gap-[5px]">
        <svg width="10" height="12" viewBox="0 0 10 12" fill="none" stroke="#666" strokeWidth="1.1">
          <rect x="1" y="1" width="8" height="10" rx="2.5" /><path d="M1 3.5c2 1.3 6 1.3 8 0" />
        </svg>
        数据源
      </button>
      <button className="px-[9px] min-w-[91px] bg-[#fafafa] border-x border-[#c8c8c8]">工作表 1</button>
      <button className={add} aria-label="新建工作表">
        <svg width="17" height="16" viewBox="0 0 17 16" fill="none" stroke="#666" strokeWidth="1.2">
          <path d="M7.5 12H1.5V1.5h11V7M4.5 9.5V7M7 9.5v-5M9.5 7.5V5.5" /><path d="M12.5 7.5v8M8.5 11.5h8" strokeWidth="2" />
        </svg>
      </button>
      <button className={add} aria-label="新建仪表板">
        <svg width="17" height="16" viewBox="0 0 17 16" fill="none" stroke="#666" strokeWidth="1.2">
          <path d="M7.5 12H1.5V1.5h11V7M7 1.5V12M1.5 6.5h11" /><path d="M12.5 7.5v8M8.5 11.5h8" strokeWidth="2" />
        </svg>
      </button>
      <button className={add} aria-label="新建故事">
        <svg width="17" height="16" viewBox="0 0 17 16" fill="none" stroke="#666" strokeWidth="1.2">
          <path d="M7 12.5L1.5 11V1.5L6.5 3v9.5M6.5 3l5-1.5V7" /><path d="M12.5 7.5v8M8.5 11.5h8" strokeWidth="2" />
        </svg>
      </button>
    </nav>
  )
}

function StatusBar() {
  const cell = 'border-l border-[#ccc]'
  const grid = (
    <svg width="11" height="11" viewBox="0 0 11 11" fill="#c2c2c2"><path d="M0 0h5v5H0zM6 0h5v5H6zM0 6h5v5H0zM6 6h5v5H6z" /></svg>
  )
  return (
    <footer className="relative flex h-[31px] bg-[#ebebeb] border-t border-[#ccc] border-b-2 border-b-[#bbb] pl-1 gap-[34px] items-center text-base text-black">
      <span>3 个标记</span>
      <span>1 行 x 1 列</span>
      <span>总和(同期值): 2,495,393</span>
      <div className="ml-auto self-stretch flex">
        <div className={`${cell} w-[189px]`} />
        <div className={`${cell} w-[39px]`} />
        <div className={`${cell} w-[39px]`} />
        <div className={`${cell} w-[69px]`} />
        <div className={`${cell} w-[73px] flex items-center pl-3`}>
          <svg width="6" height="8" viewBox="0 0 6 8"><path d="M6 0v8L0 4z" fill="#bbb" /></svg>
        </div>
        <div className={`${cell} w-[75px] flex items-center justify-end gap-3 pr-[7px]`}>
          {grid}
          {grid}
          <span className="w-[11px] h-[11px] bg-[#666]" />
        </div>
      </div>
      <span className="absolute right-[15px] top-0 leading-[22px] text-[19px] font-light text-[#f4f4f4] [text-shadow:0_0_1px_#777,1px_1px_1px_#777]">CSDN @姚媛媛0502</span>
    </footer>
  )
}

/* ---------- hierarchy dialog ---------- */

function HierarchyDialog() {
  const [name, setName] = useState('省市, 地市')
  return (
    <div className="absolute left-[730px] top-[454px] w-[439px] border-[7px] border-[#fb3838] bg-[#efefef] shadow-[0_40px_60px_rgba(0,0,0,0.26),0_0_50px_rgba(0,0,0,0.14)]">
      <form role="dialog" aria-label="创建分层结构" onSubmit={(e) => e.preventDefault()}
        className="mt-0.5 h-[156px] rounded-lg border-y-2 border-[#b3b3b3] text-black overflow-hidden">
        <div className="flex items-center justify-between h-[43px] pl-[9px] pr-[11px] pb-0.5 bg-[#f9f0ee]">
          <h2 className="text-lg leading-[26px] text-[#222]">创建分层结构</h2>
          <button type="button" aria-label="关闭">
            <svg width="15" height="15" viewBox="0 0 15 15" stroke="#222" strokeWidth="1.4"><path d="M0 0l15 15M15 0L0 15" /></svg>
          </button>
        </div>
        <div className="flex items-center mt-[17px] pl-[13px] pr-2.5">
          <label htmlFor="hierarchy-name" className="w-[47px] text-base">名称:</label>
          <input id="hierarchy-name" autoFocus value={name} onChange={(e) => setName(e.target.value)} onFocus={(e) => e.target.select()}
            className="flex-1 min-w-0 h-[27px] pl-[3px] text-base leading-5 bg-white border-b-2 border-[#0067c0] outline-none selection:bg-[#0078d7] selection:text-white" />
        </div>
        <div className="flex justify-end gap-[11px] mt-4 pr-[11px]">
          <button type="submit" className="w-[110px] h-8 rounded-[4px] bg-[#fdfdfd] border border-[#0078d4] text-base">确定</button>
          <button type="button" className="w-[110px] h-8 rounded-[4px] bg-[#fdfdfd] border border-[#d0d0d0] text-base">取消</button>
        </div>
      </form>
    </div>
  )
}

/* red boxes and the arrow drawn over the field list */
function Annotations() {
  return (
    <div className="pointer-events-none">
      <div className="absolute left-[13px] top-[298px] w-[99px] h-[40px] border-[7px] border-[#fb3838]" />
      <div className="absolute left-[26px] top-[361px] w-[85px] h-[37px] border-[7px] border-[#fb3838]" />
      <svg className="absolute left-[117px] top-[322px]" width="16" height="45" viewBox="0 0 16 45">
        <path d="M8 0L9 0.5 12 28h4L8 45 0 28h4z" fill="#fb3838" />
      </svg>
    </div>
  )
}

export default function App() {
  return (
    <div className="relative h-screen flex flex-col overflow-hidden bg-[#f4f4f4] font-['Open_Sans','Noto_Sans_CJK_SC',sans-serif]">
      <TitleBar />
      <nav className="h-[29px] flex items-center gap-[18px] pl-2 bg-white text-lg leading-[26px] text-[#999]">
        {MENUS.map((m) => (
          <button key={m} className="whitespace-nowrap">{m}</button>
        ))}
      </nav>
      <Toolbar />
      <div className="flex-1 flex min-h-0">
        <DataPane />
        <CardsColumn />
        <Worksheet />
      </div>
      <SheetTabs />
      <StatusBar />
      <ShowMe />
      <Annotations />
      <HierarchyDialog />
    </div>
  )
}
